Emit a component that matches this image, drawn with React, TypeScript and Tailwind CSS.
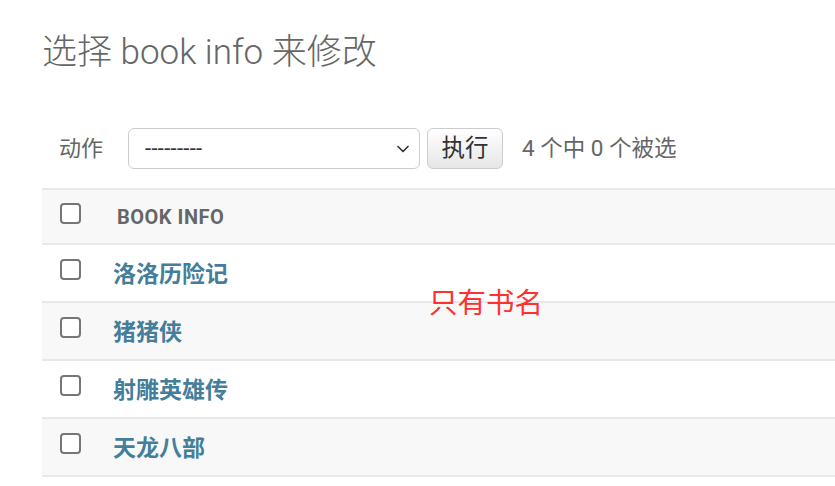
import { ChevronDown } from "lucide-react";

const books = ["洛洛历险记", "猪猪侠", "射雕英雄传", "天龙八部"];

const Box = () => (
  <div className="w-[21px] h-[21px] rounded-[4px] border-2 border-[#767676] bg-white" />
);

export default function App() {
  return (
    <div
      className="relative w-[835px] h-[486px] overflow-hidden bg-white pl-[42px] pt-[30px]"
      style={{ fontFamily: "Roboto, 'Noto Sans CJK SC', sans-serif" }}
    >
      {/* Title */}
      <h1 className="text-[35px] leading-[46px] font-light text-[#666]">
        选择 book info 来修改
      </h1>

      {/* Actions */}
      <div className="mt-[52px] flex items-center pl-[17px] h-[41px]">
        <span className="text-[22px] text-[#666] mr-[25px]">动作</span>
        <div className="w-[292px] h-[41px] rounded-[6px] border border-[#ccc] flex items-center justify-between pl-[16px] pr-[6px]">
          <span className="text-[22px] text-[#333] tracking-[0.3px]">---------</span>
          <ChevronDown className="w-[20px] h-[20px] text-[#333]" strokeWidth={2} />
        </div>
        <div className="ml-[7px] w-[76px] h-[41px] rounded-[6px] border border-[#ccc] bg-gradient-to-b from-white to-[#e6e6e6] flex items-center justify-center text-[23.5px] text-[#333]">
          执行
        </div>
        <span className="ml-[19px] text-[22.5px] text-[#666]">4 个中 0 个被选</span>
      </div>

      {/* Table */}
      <div className="mt-[19px] w-[900px]">
        <div className="flex h-[57px] bg-[#f8f8f8] border-t-2 border-b-2 border-[#e8e8e8]">
          <div className="w-[75px] pl-[18px] pt-[13px]">
            <Box />
          </div>
          <div className="flex items-center text-[20px] font-bold text-[#666] tracking-[0.5px]">
            BOOK INFO
          </div>
        </div>
        {books.map((b, i) => (
          <div
            key={b}
            className={`flex h-[58px] border-b-2 border-[#e8e8e8] ${
              i % 2 === 1 ? "bg-[#f8f8f8]" : "bg-white"
            }`}
          >
            <div className="w-[71px] pl-[18px] pt-[14px]">
              <Box />
            </div>
            <div className="flex items-center pt-[4px] text-[23px] font-bold text-[#447e9b]">
              {b}
            </div>
          </div>
        ))}
      </div>

      {/* Annotation */}
      <div className="absolute left-[429px] top-[286px] text-[28.5px] text-[#ff3030] leading-[36px]">
        只有书名
      </div>
    </div>
  );
}
